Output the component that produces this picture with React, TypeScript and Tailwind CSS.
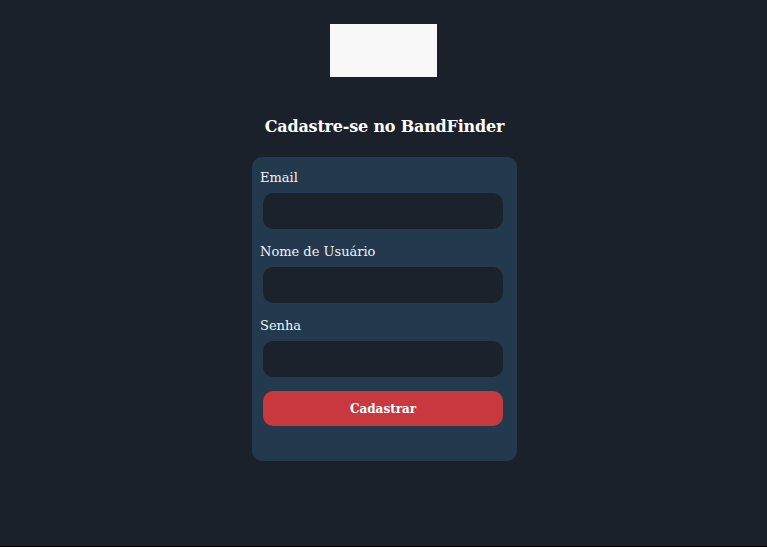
export default function App() {
  const fields = ["Email", "Nome de Usuário", "Senha"];
  return (
    <div className="min-h-screen bg-black">
      <div
        className="h-[546px] bg-[#1b212b] flex flex-col items-center pt-6 text-white"
        style={{ fontFamily: '"DejaVu Serif", "Liberation Serif", serif' }}
      >
        <div className="w-[107px] h-[53px] bg-[#f9f8f9]" />
        <h1 className="mt-[38px] ml-[2px] text-[16px] font-bold leading-6 tracking-[-0.2px]">
          Cadastre-se no BandFinder
        </h1>
        <form className="mt-[18px] ml-[2px] w-[265px] h-[304px] rounded-[10px] bg-[#233a4e] px-2 pt-[13px] flex flex-col gap-[15px]">
          {fields.map((f) => (
            <div key={f}>
              <label className="block text-[13px] leading-4 text-[#f1f1f1]">{f}</label>
              <input
                type={f === "Senha" ? "password" : "text"}
                className="mt-[7px] ml-[3px] block w-[240px] h-[36px] rounded-[10px] bg-[#1c222b] outline-none"
              />
            </div>
          ))}
          <button
            type="button"
            className="-mt-px ml-[3px] w-[240px] h-[35px] rounded-[10px] bg-[#c9383e] text-[12px] font-bold text-white"
          >
            Cadastrar
          </button>
        </form>
      </div>
    </div>
  );
}
